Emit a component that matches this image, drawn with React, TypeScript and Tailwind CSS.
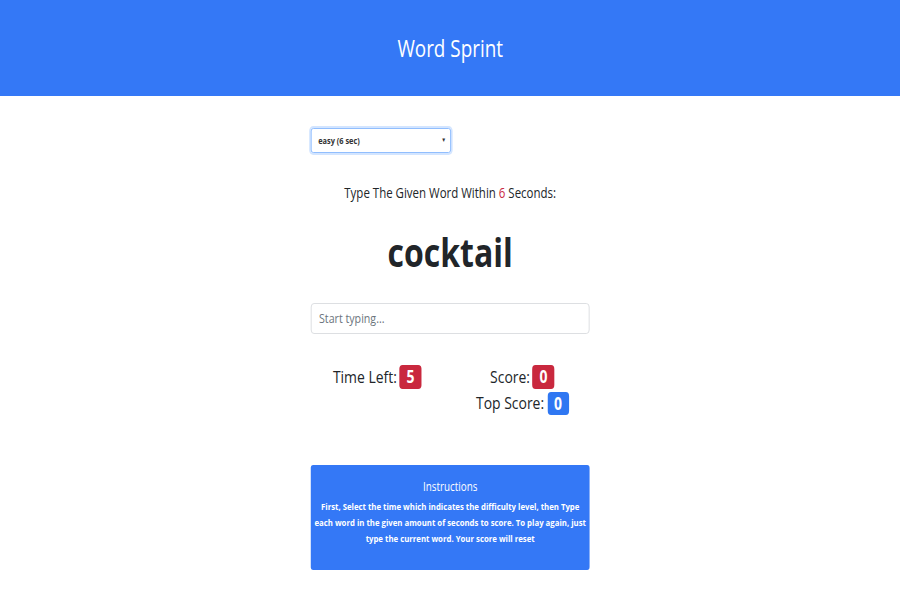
import React from "react";

const font = { fontFamily: '"Open Sans", "Noto Sans", sans-serif' };

export default function App() {
  return (
    <div className="w-[900px] h-[600px] overflow-hidden bg-white">
      <div className="w-[1098px] origin-top-left scale-x-[0.82] text-[#212529]" style={font}>
        <header className="h-[96px] bg-[#3478f6] flex items-center justify-center">
          <h1 className="text-white text-[23px] font-medium leading-none">Word Sprint</h1>
        </header>
        <main className="mx-auto w-[340px] pt-[32px]">
          <div className="relative w-[171px] h-[25px] rounded-[3px] border border-[#86b7fe] shadow-[0_0_0_2px_rgba(13,110,253,0.18)] flex items-center px-[8px] text-[9px] font-bold text-[#333]">
            easy (6 sec)
            <span className="absolute right-[5px] top-[7px] text-[6px]">▼</span>
          </div>
          <p className="mt-[30px] text-center text-[14px] leading-[20px] whitespace-nowrap">
            Type The Given Word Within <span className="text-[#c9283e]">6</span> Seconds:
          </p>
          <h2 className="mt-[22px] text-center text-[39px] font-bold leading-[54px] text-[#212529]">cocktail</h2>
          <div className="mt-[24px] h-[31px] rounded-[4px] border border-[#d9dcdf] flex items-center px-[9px] text-[13px] text-[#6c757d]">
            Start typing...
          </div>
          <div className="mt-[30px] grid grid-cols-2 text-[17px]">
            <div className="flex justify-center items-center gap-[3px] h-[26px] pr-[8px]">
              Time Left:
              <span className="bg-[#c9283e] text-white rounded-[4px] w-[27px] text-center h-[24px] leading-[24px] font-bold">5</span>
            </div>
            <div className="flex flex-col items-center pl-[6px]">
              <div className="flex items-center gap-[3px] h-[26px]">
                Score:
                <span className="bg-[#c9283e] text-white rounded-[4px] w-[27px] text-center h-[24px] leading-[24px] font-bold">0</span>
              </div>
              <div className="flex items-center gap-[4px] h-[26px]">
                Top Score:
                <span className="bg-[#2f77f2] text-white rounded-[4px] w-[26px] text-center h-[23px] leading-[23px] font-bold">0</span>
              </div>
            </div>
          </div>
          <div className="mt-[49px] h-[105px] rounded-[3px] bg-[#3478f6] text-white text-center px-[2px] pt-[14px]">
            <div className="text-[12px] leading-[16px]">Instructions</div>
            <p className="mt-[4px] text-[9.5px] font-bold leading-[16px] whitespace-nowrap">
              First, Select the time which indicates the difficulty level, then Type
              <br />
              each word in the given amount of seconds to score. To play again, just
              <br />
              type the current word. Your score will reset
            </p>
          </div>
        </main>
      </div>
    </div>
  );
}
